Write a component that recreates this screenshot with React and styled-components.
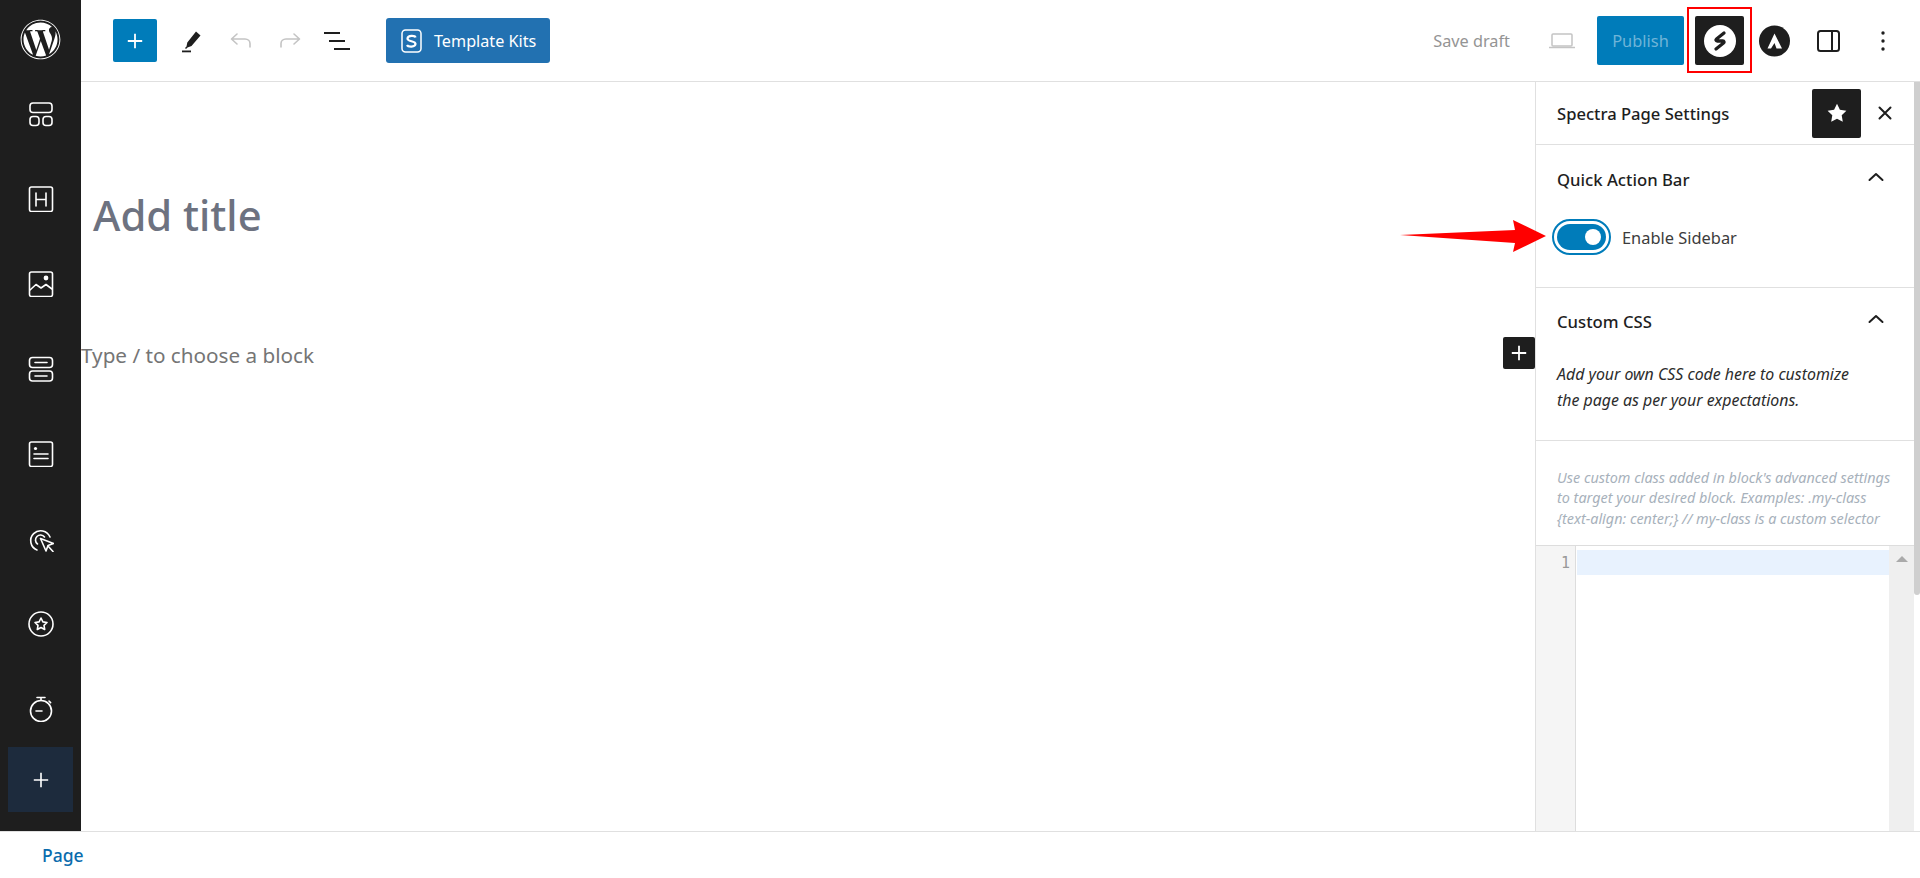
import React from 'react';
import styled, { createGlobalStyle } from 'styled-components';
import { FaWordpress } from 'react-icons/fa';

const GlobalStyle = createGlobalStyle`
  html, body {
    margin: 0;
    padding: 0;
    background: #fff;
    overflow: hidden;
  }
  * { box-sizing: border-box; }
  body {
    font-family: "Noto Sans", "Open Sans", sans-serif;
    color: #1e1e1e;
  }
`;

const Page = styled.div`
  display: grid;
  grid-template-columns: 81px 1fr;
  grid-template-rows: 831px 47px;
  width: 1920px;
  height: 878px;
`;

const Rail = styled.nav`
  display: flex;
  flex-direction: column;
  align-items: center;
  background: #1e1e1e;
`;

const RailLogo = styled.div`
  display: flex;
  align-items: center;
  justify-content: center;
  height: 71px;
  padding-top: 8px;
  color: #fff;
`;

const RailItem = styled.div`
  display: flex;
  align-items: center;
  justify-content: center;
  flex: none;
  height: 85px;
  color: #fff;
`;

const RailAdd = styled.div`
  display: flex;
  align-items: center;
  justify-content: center;
  width: 65px;
  height: 65px;
  margin-top: -4px;
  background: #1d2b3d;
  color: #fff;
`;

const Workspace = styled.div`
  display: flex;
  flex-direction: column;
  min-width: 0;
`;

const TopBar = styled.header`
  display: flex;
  align-items: center;
  flex: none;
  height: 82px;
  padding: 0 34px 0 32px;
  border-bottom: 1px solid #e0e0e0;
`;

const ToolGroup = styled.div`
  display: flex;
  align-items: center;
  margin-left: ${({ $auto }) => ($auto ? 'auto' : '0')};
`;

const InserterButton = styled.button`
  display: flex;
  align-items: center;
  justify-content: center;
  width: 44px;
  height: 43px;
  padding: 0;
  border: none;
  border-radius: 2px;
  background: #007cba;
  color: #fff;
`;

const ToolIcon = styled.span`
  display: flex;
  align-items: center;
  justify-content: center;
  width: ${({ $w }) => $w}px;
  margin-left: ${({ $ml }) => $ml || 0}px;
  color: ${({ $muted }) => ($muted ? '#c4c4c4' : '#1e1e1e')};
`;

const KitsButton = styled.button`
  display: flex;
  align-items: center;
  gap: 12px;
  width: 164px;
  height: 45px;
  margin-left: 36px;
  padding: 0 0 0 15px;
  border: none;
  border-radius: 3px;
  background: #2271b1;
  color: #fff;
  font: 400 16.2px "Noto Sans", sans-serif;
`;

const SaveDraft = styled.span`
  font-size: 16.3px;
  color: #949494;
`;

const PublishButton = styled.button`
  width: 87px;
  height: 49px;
  margin-left: 22px;
  padding: 0;
  border: none;
  border-radius: 2px;
  background: #007cba;
  color: #6fb4d8;
  font: 400 16.4px "Noto Sans", sans-serif;
`;

const SpectraWrap = styled.div`
  position: relative;
  display: flex;
  align-items: center;
  justify-content: center;
  width: 49px;
  height: 49px;
  margin-left: 11px;
  border-radius: 2px;
  background: #1e1e1e;
`;

const Highlight = styled.div`
  position: absolute;
  top: -9px;
  left: -8px;
  width: 65px;
  height: 66px;
  border: 2.5px solid #f00;
`;

const AstraIcon = styled.span`
  display: flex;
  margin-left: 15px;
`;

const Body = styled.div`
  display: flex;
  flex: 1;
  min-height: 0;
`;

const Canvas = styled.main`
  display: flex;
  flex-direction: column;
  flex: 1;
  min-width: 0;
`;

const TitleField = styled.h1`
  margin: 104px 0 0 12px;
  font-size: 41.8px;
  line-height: 58px;
  font-weight: 500;
  color: #6d7280;
`;

const BlockRow = styled.div`
  display: flex;
  align-items: center;
  justify-content: space-between;
  margin-top: 93px;
  height: 32px;
`;

const Placeholder = styled.span`
  margin-top: 3px;
  font-size: 20.7px;
  color: #757575;
`;

const BlockAdd = styled.span`
  display: flex;
  align-items: center;
  justify-content: center;
  width: 32px;
  height: 32px;
  border-radius: 2px;
  background: #1e1e1e;
  color: #fff;
`;

const Panel = styled.aside`
  position: relative;
  display: flex;
  flex-direction: column;
  flex: none;
  width: 385px;
  padding-right: 6px;
  border-left: 1px solid #e0e0e0;
`;

const PanelScroll = styled.div`
  position: absolute;
  top: 0;
  right: 0;
  width: 6px;
  height: 513px;
  border-radius: 0 0 3px 3px;
  background: #cfcfcf;
`;

const PanelHead = styled.div`
  display: flex;
  align-items: center;
  flex: none;
  height: 63px;
  padding: 0 0 0 21px;
  border-bottom: 1px solid #e0e0e0;
`;

const PanelTitle = styled.span`
  font-size: 16.6px;
  font-weight: 500;
`;

const StarButton = styled.span`
  display: flex;
  align-items: center;
  justify-content: center;
  width: 49px;
  height: 49px;
  margin-left: auto;
  border-radius: 2px;
  background: #1e1e1e;
  color: #fff;
`;

const CloseIcon = styled.span`
  display: flex;
  margin: 0 22px 0 17px;
`;

const Section = styled.section`
  flex: none;
  height: ${({ $h }) => $h}px;
  padding: 0 21px;
  border-bottom: 1px solid #e0e0e0;
`;

const SectionHead = styled.div`
  display: flex;
  align-items: center;
  justify-content: space-between;
  height: ${({ $h }) => $h}px;
  padding-right: 9px;
  font-size: 16.7px;
  font-weight: 500;
`;

const Chevron = styled.span`
  display: flex;
  margin-bottom: 6px;
`;

const ToggleRow = styled.div`
  display: flex;
  align-items: center;
  gap: 11px;
  margin: 5px 0 0 -5px;
  font-size: 16.4px;
  color: #3c3c3c;
`;

const ToggleOuter = styled.span`
  display: flex;
  align-items: center;
  width: 59px;
  height: 36px;
  padding: 3px;
  border: 2px solid #007cba;
  border-radius: 18px;
`;

const ToggleTrack = styled.span`
  display: flex;
  align-items: center;
  justify-content: flex-end;
  width: 100%;
  height: 100%;
  padding-right: 5px;
  border-radius: 13px;
  background: #007cba;
`;

const ToggleKnob = styled.span`
  width: 16px;
  height: 16px;
  border-radius: 50%;
  background: #fff;
`;

const Description = styled.p`
  margin: 0;
  padding-top: 6px;
  font-size: 15.9px;
  font-style: italic;
  line-height: 26px;
  color: #2c2c2c;
`;

const Hint = styled.p`
  flex: none;
  height: 104px;
  margin: 0;
  padding: 26.5px 0 0 21px;
  font-size: 14.4px;
  font-style: italic;
  line-height: 20.5px;
  white-space: nowrap;
  color: #a7b1bb;
`;

const Editor = styled.div`
  display: flex;
  flex: 1;
  min-height: 0;
  border-top: 1px solid #ddd;
`;

const Gutter = styled.div`
  flex: none;
  width: 40px;
  padding: 5px 5px 0 0;
  border-right: 1px solid #ddd;
  background: #f5f5f5;
  font: 15px/25px "DejaVu Sans Mono", monospace;
  color: #999;
  text-align: right;
`;

const Lines = styled.div`
  flex: 1;
  padding: 4px 0 0 1px;
`;

const ActiveLine = styled.div`
  height: 25px;
  background: #e8f2fe;
`;

const EditorScroll = styled.div`
  display: flex;
  justify-content: center;
  flex: none;
  width: 25px;
  padding-top: 10px;
  background: #efefef;
`;

const ScrollArrow = styled.span`
  width: 0;
  height: 0;
  border-left: 6px solid transparent;
  border-right: 6px solid transparent;
  border-bottom: 6px solid #aaa;
`;

const Footer = styled.footer`
  display: flex;
  align-items: center;
  grid-column: 1 / -1;
  padding-left: 42px;
  border-top: 1px solid #e0e0e0;
  font-size: 17.5px;
  font-weight: 500;
  color: #0a6cad;
`;

const Arrow = styled.svg`
  position: absolute;
  top: 220px;
  left: 1400px;
`;

const Line = ({ w = 26, h = 26, sw = 1.6, children }) => (
  <svg width={w} height={h} viewBox={`0 0 ${w} ${h}`} fill="none" stroke="currentColor" strokeWidth={sw} strokeLinecap="round" strokeLinejoin="round">
    {children}
  </svg>
);

const Plus = ({ size = 20, sw = 2 }) => (
  <svg width={size} height={size} viewBox="0 0 20 20" stroke="currentColor" strokeWidth={sw} fill="none">
    <path d="M10 2v16M2 10h16" />
  </svg>
);

const railIcons = [
  <Line key="patterns"><rect x="2" y="2" width="22" height="9.5" rx="3" /><rect x="2" y="15.5" width="9" height="9" rx="3" /><rect x="15" y="15.5" width="9" height="9" rx="3" /></Line>,
  <Line key="heading"><rect x="1.5" y="1" width="23" height="24.5" rx="2" /><path d="M8 7v13M18 7v13M8 13.5h10" /></Line>,
  <Line key="image"><rect x="1.5" y="1" width="23" height="24.5" rx="2" /><path d="M2 19l6-5.5 5 3.5 5-3.5 6 4.5" /><circle cx="18" cy="7" r="1.6" fill="currentColor" /></Line>,
  <Line key="rows"><rect x="1.5" y="1.5" width="23" height="10" rx="3" /><rect x="1.5" y="15" width="23" height="10" rx="3" /><path d="M7 6.5h12M7 20h12" /></Line>,
  <Line key="post"><rect x="1.5" y="1" width="23" height="24.5" rx="2" /><circle cx="7.5" cy="7.5" r="1.6" fill="currentColor" stroke="none" /><path d="M6 13h14M6 17.5h14" /></Line>,
  <Line key="click"><path d="M9 24a10 10 0 1 1 13-13" /><path d="M9.5 18a5 5 0 1 1 7-7" /><path d="M12.5 12.5l13 5-5.5 2-2 5.5z" /><path d="M20 20l5 5.5" /></Line>,
  <Line key="star"><circle cx="13" cy="13" r="12" /><path d="M13 7l1.9 3.9 4.1.6-3 2.9.7 4.1-3.7-2-3.7 2 .7-4.1-3-2.9 4.1-.6z" /></Line>,
  <Line key="timer"><circle cx="13" cy="15" r="10.5" /><path d="M9 1.5h8M13 2v2.5M21 5l1.6 1.6M8 15h6" /></Line>
];

const chevronUp = (
  <Chevron>
    <Line w={16} h={10} sw={2}><path d="M1.5 8L8 2l6.5 6" /></Line>
  </Chevron>
);

export default function App() {
  return (
    <Page>
      <GlobalStyle />
      <Rail>
        <RailLogo><FaWordpress size={41} /></RailLogo>
        {railIcons.map((icon) => <RailItem key={icon.key}>{icon}</RailItem>)}
        <RailAdd><Plus size={18} sw={1.8} /></RailAdd>
      </Rail>
      <Workspace>
        <TopBar>
          <ToolGroup>
            <InserterButton><Plus size={18} /></InserterButton>
            <ToolIcon $w={20} $ml={24}>
              <svg width="20" height="24" viewBox="0 0 20 24" fill="currentColor">
                <path d="M15 2.5l4.5 4-9 10.5-4 1.5L5 20l-1-1 1.5-1.5.8-4z" />
                <rect x="1" y="21.5" width="9" height="1.8" />
              </svg>
            </ToolIcon>
            <ToolIcon $w={23} $ml={28} $muted>
              <Line w={22} h={18} sw={1.6}><path d="M7 2L1.5 7 7 12M2 7h13c3 0 5 2 5 4.5V15" /></Line>
            </ToolIcon>
            <ToolIcon $w={23} $ml={26} $muted>
              <Line w={22} h={18} sw={1.6}><path d="M15 2l5.5 5L15 12M20 7H7c-3 0-5 2-5 4.5V15" /></Line>
            </ToolIcon>
            <ToolIcon $w={26} $ml={23}>
              <svg width="26" height="20" viewBox="0 0 26 20" fill="currentColor">
                <rect x="0" y="1" width="16" height="2" /><rect x="5" y="9" width="16" height="2" /><rect x="10" y="17" width="16" height="2" />
              </svg>
            </ToolIcon>
            <KitsButton>
              <svg width="21" height="24" viewBox="0 0 21 24" fill="none" stroke="currentColor">
                <rect x="1" y="1" width="19" height="22" rx="3.5" strokeWidth="1.5" />
                <path d="M14.5 8.5c-.5-2-7.5-2.5-8 1C6 13 14.8 11.5 14.5 15c-.3 3.5-7.5 3-8.5 1" strokeWidth="2.2" />
              </svg>
              Template Kits
            </KitsButton>
          </ToolGroup>
          <ToolGroup $auto>
            <SaveDraft>Save draft</SaveDraft>
            <ToolIcon $w={26} $ml={39} $muted>
              <svg width="26" height="18" viewBox="0 0 26 18" fill="none" stroke="currentColor" strokeWidth="1.5">
                <rect x="3" y="2" width="20" height="12" rx="1" />
                <path d="M0 15.5h26" />
              </svg>
            </ToolIcon>
            <PublishButton>Publish</PublishButton>
            <SpectraWrap>
              <Highlight />
              <svg width="32" height="32" viewBox="0 0 32 32" fill="none">
                <circle cx="16" cy="16" r="16" fill="#fff" />
                <path d="M20 8l-7.5 6c-1 .8-.6 2 .7 2h5.600c1.300 0 1.700 1.200.7 2L12 24" stroke="#1e1e1e" strokeWidth="3.3" strokeLinecap="round" strokeLinejoin="round" />
              </svg>
            </SpectraWrap>
            <AstraIcon>
              <svg width="31" height="32" viewBox="0 0 31 32">
                <circle cx="15.5" cy="16" r="15.5" fill="#1e1e1e" />
                <path d="M15.5 8.5L23 23.5h-5.5l-2-5.5-3.5 5.5H8.5z" fill="#fff" />
              </svg>
            </AstraIcon>
            <ToolIcon $w={23} $ml={27}>
              <svg width="23" height="22" viewBox="0 0 23 22" fill="none" stroke="currentColor" strokeWidth="2">
                <rect x="1" y="1" width="21" height="20" rx="2.5" />
                <path d="M15 1v20" />
              </svg>
            </ToolIcon>
            <ToolIcon $w={6} $ml={40}>
              <svg width="6" height="22" viewBox="0 0 6 22" fill="currentColor">
                <circle cx="3" cy="3" r="1.7" /><circle cx="3" cy="11" r="1.7" /><circle cx="3" cy="19" r="1.7" />
              </svg>
            </ToolIcon>
          </ToolGroup>
        </TopBar>
        <Body>
          <Canvas>
            <TitleField>Add title</TitleField>
            <BlockRow>
              <Placeholder>Type / to choose a block</Placeholder>
              <BlockAdd><Plus size={18} /></BlockAdd>
            </BlockRow>
          </Canvas>
          <Panel>
            <PanelScroll />
            <PanelHead>
              <PanelTitle>Spectra Page Settings</PanelTitle>
              <StarButton>
                <svg width="20" height="20" viewBox="0 0 20 20" fill="currentColor">
                  <path d="M10 .8l2.9 6 6.5.9-4.7 4.600 1.100 6.500-5.800-3.100-5.800 3.100 1.100-6.500L.6 7.700l6.500-.9z" />
                </svg>
              </StarButton>
              <CloseIcon>
                <Line w={14} h={14} sw={2}><path d="M1.5 1.5l11 11M12.5 1.5l-11 11" /></Line>
              </CloseIcon>
            </PanelHead>
            <Section $h={143}>
              <SectionHead $h={69}>
                Quick Action Bar
                {chevronUp}
              </SectionHead>
              <ToggleRow>
                <ToggleOuter><ToggleTrack><ToggleKnob /></ToggleTrack></ToggleOuter>
                Enable Sidebar
              </ToggleRow>
            </Section>
            <Section $h={153}>
              <SectionHead $h={67}>
                Custom CSS
                {chevronUp}
              </SectionHead>
              <Description>Add your own CSS code here to customize<br />the page as per your expectations.</Description>
            </Section>
            <Hint>
              Use custom class added in block's advanced settings<br />
              to target your desired block. Examples: .my-class<br />
              {'{text-align: center;}'} // my-class is a custom selector
            </Hint>
            <Editor>
              <Gutter>1</Gutter>
              <Lines><ActiveLine /></Lines>
              <EditorScroll><ScrollArrow /></EditorScroll>
            </Editor>
          </Panel>
        </Body>
      </Workspace>
      <Footer>Page</Footer>
      <Arrow width="146" height="34" viewBox="0 0 146 34">
        <path d="M0 15l115-5-2-10 33 16-33 16 2-9z" fill="#f00" />
      </Arrow>
    </Page>
  );
}
